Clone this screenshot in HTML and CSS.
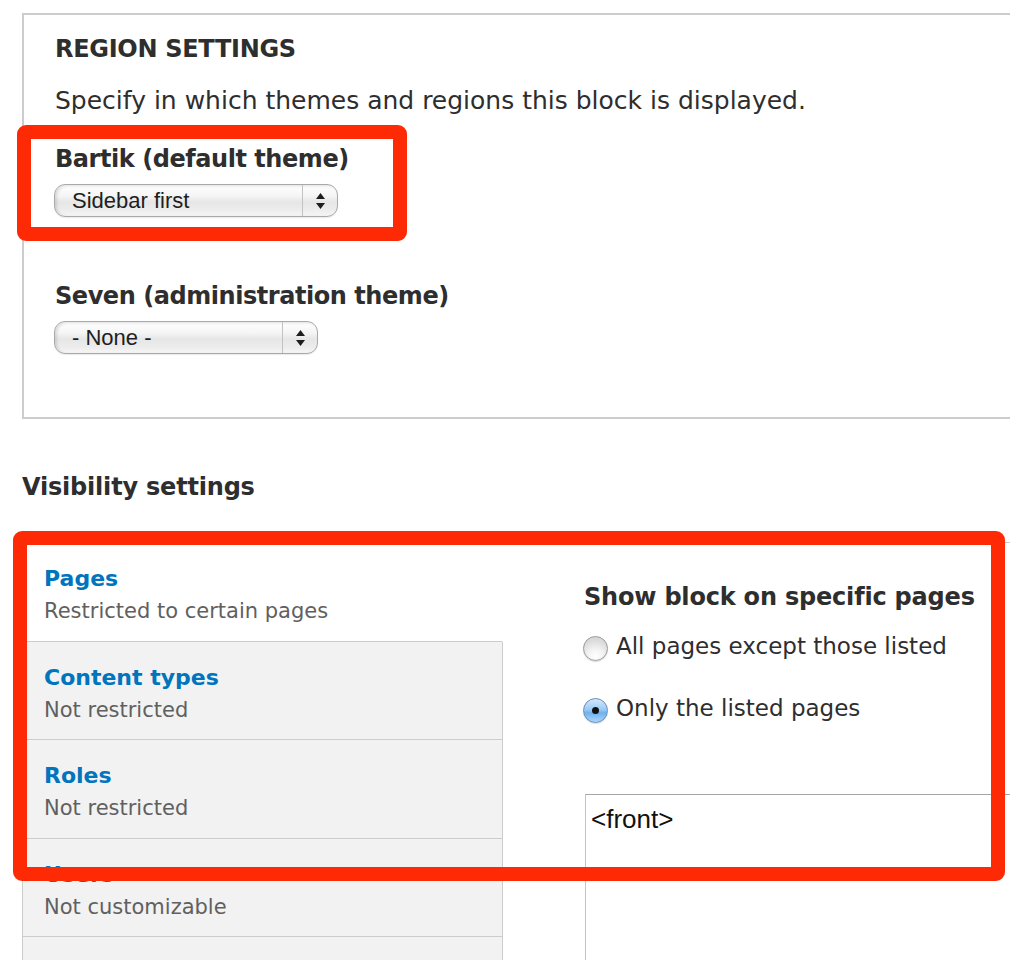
FILE: index.html
```html
<!DOCTYPE html>
<html lang="en">
<head>
<meta charset="utf-8">
<title>Block settings</title>
<link rel="stylesheet" href="styles.css">
</head>
<body>
<div class="page">
  <section class="fieldset">
    <h2 class="legend">REGION SETTINGS</h2>
    <p class="help">Specify in which themes and regions this block is displayed.</p>
    <div class="form-item item-bartik">
      <label class="label">Bartik (default theme)</label>
      <div class="select select-wide">
        <span class="value">Sidebar first</span>
        <span class="arrows"><svg width="9" height="16" viewBox="0 0 9 16"><polygon points="0,6 4.5,0 9,6" fill="#1e1e1e"/><polygon points="0,10 9,10 4.5,16" fill="#1e1e1e"/></svg></span>
      </div>
    </div>
    <div class="form-item item-seven">
      <label class="label">Seven (administration theme)</label>
      <div class="select select-narrow">
        <span class="value">- None -</span>
        <span class="arrows"><svg width="9" height="16" viewBox="0 0 9 16"><polygon points="0,6 4.5,0 9,6" fill="#1e1e1e"/><polygon points="0,10 9,10 4.5,16" fill="#1e1e1e"/></svg></span>
      </div>
    </div>
  </section>

  <h2 class="section-title">Visibility settings</h2>

  <div class="vtabs">
    <ul class="vtabs-menu">
      <li class="vtab selected"><a class="vtab-title">Pages</a><span class="summary">Restricted to certain pages</span></li>
      <li class="vtab"><a class="vtab-title">Content types</a><span class="summary">Not restricted</span></li>
      <li class="vtab"><a class="vtab-title">Roles</a><span class="summary">Not restricted</span></li>
      <li class="vtab"><a class="vtab-title">Users</a><span class="summary">Not customizable</span></li>
      <li class="vtab vtab-empty"></li>
    </ul>
    <div class="vtabs-pane">
      <h3 class="pane-title">Show block on specific pages</h3>
      <label class="radio"><span class="radio-btn"></span><span class="radio-text">All pages except those listed</span></label>
      <label class="radio radio-second"><span class="radio-btn checked"></span><span class="radio-text">Only the listed pages</span></label>
      <div class="textarea">&lt;front&gt;</div>
    </div>
  </div>

  <div class="annot annot-region"></div>
  <div class="annot annot-visibility"></div>
</div>
</body>
</html>
```

FILE: styles.css
```css
html, body {
  margin: 0;
  padding: 0;
  background: #fff;
}
body {
  font-family: "DejaVu Sans", Verdana, sans-serif;
  color: #333;
  overflow: hidden;
  width: 1010px;
  height: 960px;
}
.page {
  position: relative;
  width: 1010px;
  height: 960px;
  overflow: hidden;
}

/* Region settings fieldset */
.fieldset {
  margin: 13px 0 0 22px;
  width: 1100px;
  box-sizing: border-box;
  border: 2px solid #cccccc;
  padding: 19px 0 63px 31px;
}
.legend {
  margin: 0;
  font-size: 24px;
  line-height: 30px;
  font-weight: bold;
  letter-spacing: -0.3px;
  color: #2e2e2e;
}
.help {
  margin: 22px 0 0;
  font-size: 25px;
  line-height: 30px;
  color: #2e2e2e;
}
.form-item {
  display: flex;
  flex-direction: column;
  align-items: flex-start;
}
.item-bartik { margin-top: 28px; }
.item-seven { margin-top: 64px; }
.label {
  font-size: 24px;
  line-height: 30px;
  font-weight: bold;
  letter-spacing: -0.45px;
  color: #2e2e2e;
  margin-bottom: 10px;
}

.select {
  display: flex;
  box-sizing: border-box;
  height: 33px;
  margin-left: -1px;
  border: 1px solid #a9a9a9;
  border-radius: 11px;
  background: linear-gradient(to bottom, #ffffff 0%, #f5f5f5 35%, #e6e6e6 55%, #ececec 80%, #f6f6f6 100%);
  box-shadow: inset 2px 1px 3px rgba(0,0,0,0.12), 0 1px 1px rgba(0,0,0,0.08);
  font-family: "Liberation Sans", Arial, sans-serif;
  font-size: 22px;
  color: #1e1e1e;
}
.select-wide { width: 284px; }
.select-narrow { width: 264px; }
.select .value {
  flex: 1;
  line-height: 31px;
  padding-left: 17px;
}
.select .arrows {
  width: 34px;
  border-left: 1px solid #c2c2c2;
  display: flex;
  align-items: center;
  justify-content: center;
}

/* Visibility */
.section-title {
  margin: 53px 0 0 22px;
  font-size: 24px;
  line-height: 30px;
  font-weight: bold;
  letter-spacing: -0.2px;
  color: #2e2e2e;
}
.vtabs {
  margin: 40px 0 0 22px;
  display: flex;
}
.vtabs-menu {
  list-style: none;
  margin: 0;
  padding: 0;
  width: 481px;
  flex: none;
  box-sizing: border-box;
  border-left: 1px solid #cccccc;
  border-top: 1px solid #cccccc;
}
.vtab {
  display: flex;
  flex-direction: column;
  background: #f2f2f2;
  border-right: 1px solid #cccccc;
  border-bottom: 1px solid #cccccc;
  padding: 22px 0 15.5px 21px;
}
.vtab.selected {
  background: #fff;
  border-right-color: #fff;
}
.vtab-empty {
  height: 60px;
}
.vtab-title {
  font-size: 22px;
  line-height: 27px;
  font-weight: bold;
  color: #0074bd;
  text-decoration: none;
}
.summary {
  margin-top: 6px;
  font-size: 21px;
  line-height: 27px;
  color: #606060;
}

.vtabs-pane {
  flex: 1;
  border-top: 1px solid #cccccc;
  padding: 39px 0 0 81px;
  display: flex;
  flex-direction: column;
  align-items: flex-start;
}
.pane-title {
  margin: 0;
  font-size: 24px;
  line-height: 30px;
  font-weight: bold;
  letter-spacing: -0.2px;
  color: #2e2e2e;
  white-space: nowrap;
}
.radio {
  display: flex;
  align-items: flex-start;
  margin-top: 19px;
  font-size: 23px;
  line-height: 30px;
  color: #2e2e2e;
  white-space: nowrap;
}
.radio-second { margin-top: 32px; }
.radio-btn {
  flex: none;
  box-sizing: border-box;
  width: 25px;
  height: 25px;
  margin: 4.5px 8px 0 -1px;
  border-radius: 50%;
  border: 1px solid #9a9a9a;
  background: radial-gradient(circle at 50% 85%, #ffffff 0%, #f2f2f2 35%, #dcdcdc 70%, #d2d2d2 100%);
  box-shadow: 0 1px 1px rgba(0,0,0,0.15);
  display: flex;
  align-items: center;
  justify-content: center;
}
.radio-btn.checked {
  border-color: #6b8db5;
  background: linear-gradient(to bottom, #d3e9fd 0%, #9ccbf5 45%, #6fb1ee 60%, #a9d7ff 100%);
}
.radio-btn.checked::after {
  content: "";
  width: 7px;
  height: 7px;
  border-radius: 50%;
  background: #111;
}
.textarea {
  margin: 71px 0 0 1px;
  width: 500px;
  height: 220px;
  box-sizing: border-box;
  border-top: 1px solid #a6a6a6;
  border-left: 1px solid #c4c4c4;
  padding: 9px 0 0 5px;
  font-family: "Liberation Sans", Arial, sans-serif;
  font-size: 26px;
  color: #111;
}

/* Red annotation frames drawn over the screenshot */
.annot {
  position: absolute;
  box-sizing: border-box;
  border: 14px solid #fe2a05;
  border-radius: 9px;
}
.annot-region {
  left: 17px;
  top: 125px;
  width: 390px;
  height: 116px;
}
.annot-visibility {
  left: 13px;
  top: 531px;
  width: 992px;
  height: 350px;
}
```
